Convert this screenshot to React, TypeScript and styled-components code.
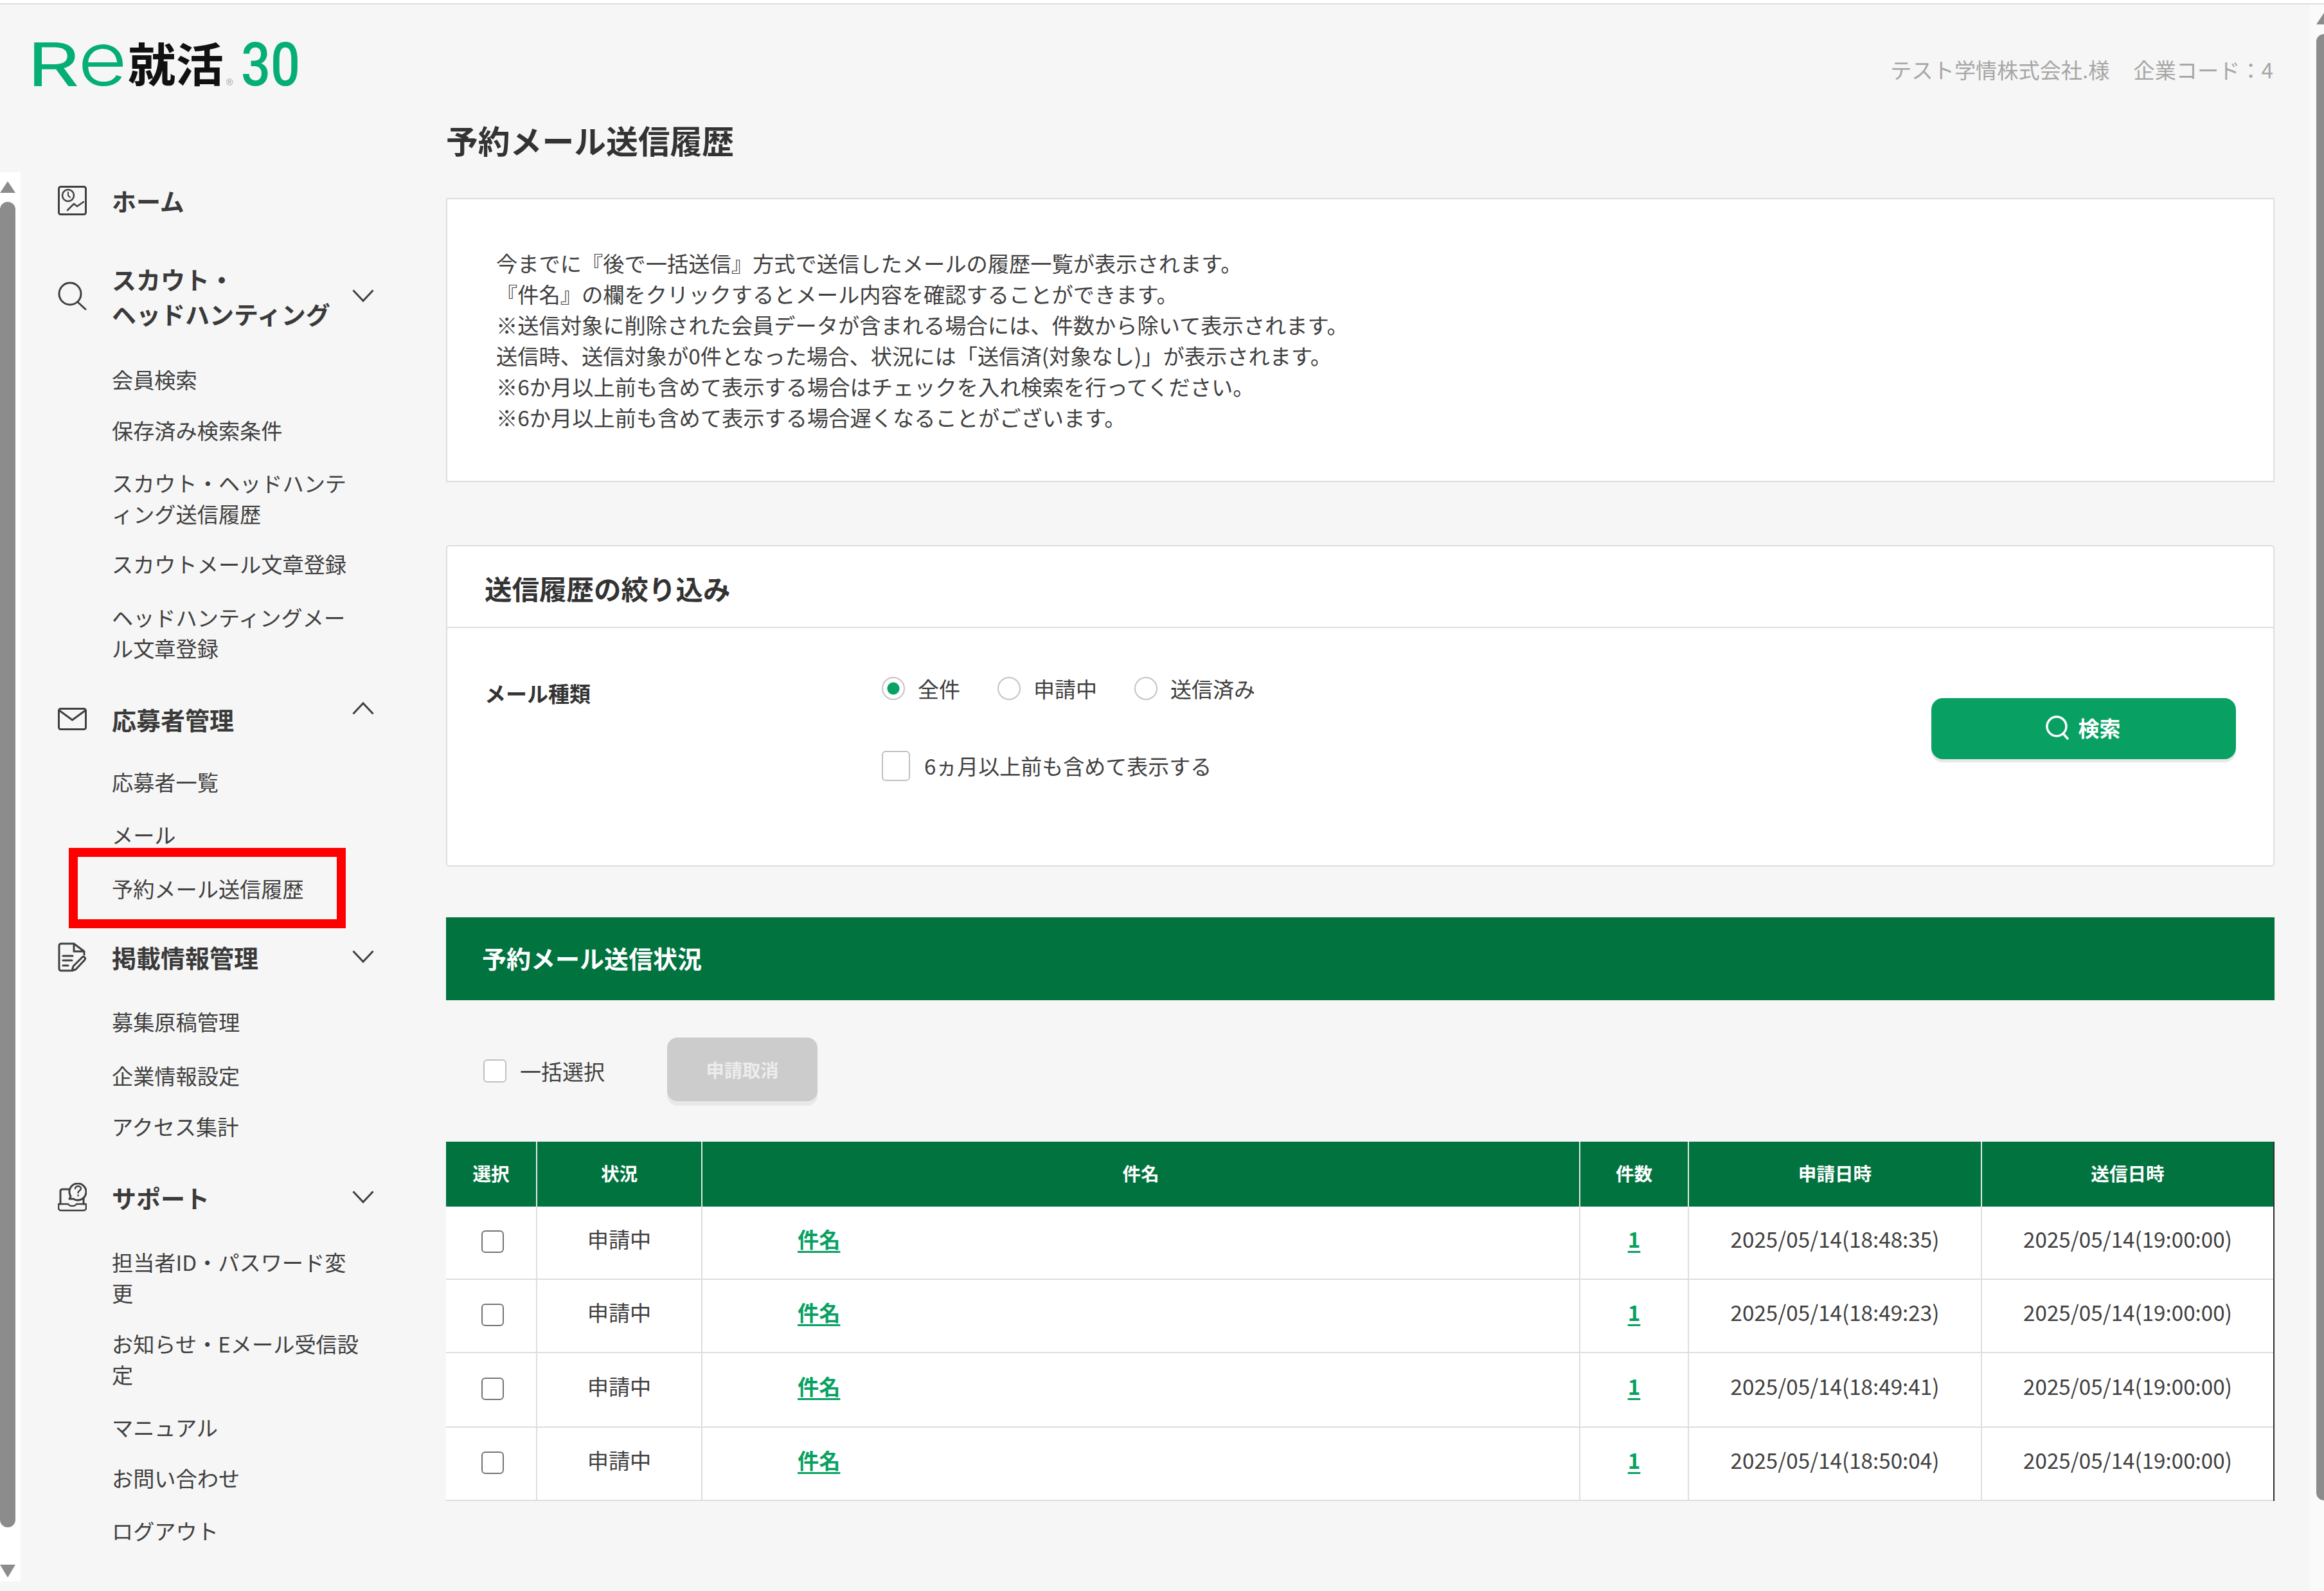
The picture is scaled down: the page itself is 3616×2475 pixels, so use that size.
import React from "react";
import styled, { createGlobalStyle } from "styled-components";

const FONT = `"Noto Sans CJK JP", "Noto Sans", sans-serif`;

const Global = createGlobalStyle`
  html, body { margin: 0; padding: 0; background: #f6f6f6; }
  body { font-family: ${FONT}; color: #444; }
  * { box-sizing: border-box; }
`;

const Page = styled.div`
  width: 3616px;
  height: 2475px;
  overflow: hidden;
  background: #f6f6f6;
  display: flex;
  flex-direction: column;
`;
const TopEdge = styled.div`
  height: 7px;
  flex: none;
  background: #fff;
  border-bottom: 2px solid #dedede;
`;
const Frame = styled.div`
  flex: 1;
  display: flex;
  min-height: 0;
`;

/* ---------- scrollbars ---------- */
const ArrowUp = styled.div`
  width: 0;
  height: 0;
  border-left: 12px solid transparent;
  border-right: 12px solid transparent;
  border-bottom: 18px solid #8c8c8c;
  flex: none;
`;
const ArrowDown = styled(ArrowUp)`
  border-bottom: 0;
  border-top: 20px solid #8c8c8c;
`;
const SideTrack = styled.div`
  width: 32px;
  height: 2192px;
  flex: none;
  background: #fff;
  padding-top: 14px;
  display: flex;
  flex-direction: column;
`;
const SideThumb = styled.div`
  width: 24px;
  height: 2062px;
  margin: 14px 0 58px;
  background: #8c8c8c;
  border-radius: 12px;
  flex: none;
`;
const PageTrack = styled.div`
  width: 22px;
  flex: none;
  background: #fafafa;
  padding: 13px 0 0 10px;
  overflow: hidden;
`;
const PageThumb = styled.div`
  width: 24px;
  height: 2281px;
  margin-top: 15px;
  background: #8c8c8c;
  border-radius: 12px;
`;

/* ---------- sidebar ---------- */
const Sidebar = styled.aside`
  width: 694px;
  flex: none;
  display: flex;
  flex-direction: column;
`;
const LogoBox = styled.div`
  height: 261px;
  padding: 20px 0 0 20px;
  flex: none;
  svg { display: block; overflow: visible; }
`;
const SideBody = styled.div`
  display: flex;
  flex: none;
`;
const Nav = styled.nav`
  padding: 17px 0 0 58px;
  flex: 1;
`;
const GroupHead = styled.div<{ $mt: number }>`
  display: flex;
  align-items: center;
  margin-top: ${(p) => p.$mt}px;
  width: 492px;
`;
const IconSlot = styled.div`
  width: 45px;
  flex: none;
  margin-right: 39px;
  display: flex;
  margin-top: -1px;
  svg { display: block; }
`;
const GroupTitle = styled.div`
  width: 374px;
  flex: none;
  font-size: 38px;
  line-height: 54px;
  font-weight: 700;
  color: #3a3a3a;
  white-space: nowrap;
`;
const Chevron = styled.svg<{ $open?: boolean }>`
  width: 34px;
  height: 20px;
  flex: none;
  margin-top: ${(p) => (p.$open ? -35 : -3)}px;
  display: block;
`;
const SubItem = styled.div<{ $mt: number }>`
  position: relative;
  margin: ${(p) => p.$mt}px 0 0 84px;
  font-size: 33.2px;
  line-height: 48px;
  font-weight: 400;
  color: #404040;
  white-space: nowrap;
`;
const Highlight = styled.div`
  position: absolute;
  left: -67px;
  top: -39px;
  width: 431px;
  height: 125px;
  border: 14px solid #ff0000;
`;

/* ---------- main ---------- */
const Main = styled.main`
  width: 2845px;
  flex: none;
  margin-right: 55px;
  display: flex;
  flex-direction: column;
`;
const Account = styled.div`
  margin-top: 77px;
  padding-right: 2px;
  display: flex;
  justify-content: flex-end;
  gap: 37px;
  font-size: 33.2px;
  line-height: 48px;
  color: #a6a6a6;
`;
const PageTitle = styled.h1`
  margin: 49px 0 2px 0;
  font-size: 49.8px;
  line-height: 72px;
  font-weight: 700;
  color: #333;
`;
const Notice = styled.section`
  margin-top: 53px;
  height: 442px;
  padding: 75px 76px 0;
  background: #fff;
  border: 2px solid #dedede;
  font-size: 33.25px;
  line-height: 48px;
  color: #404040;
`;
const FilterCard = styled.section`
  margin-top: 98px;
  height: 500px;
  background: #fff;
  border: 2px solid #dedede;
  border-radius: 5px;
  display: flex;
  flex-direction: column;
`;
const FilterHead = styled.h2`
  margin: 0;
  height: 127px;
  flex: none;
  padding: 4px 0 0 58px;
  display: flex;
  align-items: center;
  border-bottom: 2px solid #dedede;
  font-size: 42.5px;
  font-weight: 700;
  color: #333;
`;
const FilterBody = styled.div`
  flex: 1;
  display: grid;
  grid-template-columns: 616px 1fr auto;
  padding: 81px 58px 0 60px;
  align-items: start;
`;
const FieldLabel = styled.div`
  font-size: 33px;
  line-height: 48px;
  margin-top: -4px;
  margin-left: -2px;
  font-weight: 700;
  color: #333;
`;
const Options = styled.div`
  display: flex;
  flex-direction: column;
  gap: 78px;
  margin-top: -5px;
`;
const RadioRow = styled.div`
  display: flex;
  align-items: center;
  height: 36px;
`;
const RadioLabel = styled.label`
  display: flex;
  align-items: center;
  gap: 20px;
  margin-right: 58px;
  font-size: 33px;
  line-height: 36px;
  color: #404040;
`;
const Radio = styled.input.attrs({ type: "radio" })`
  appearance: none;
  margin: 0;
  width: 36px;
  height: 36px;
  border: 2.5px solid #c4c4c4;
  border-radius: 50%;
  background: #fff;
  &:checked {
    background: radial-gradient(circle, #08a262 0 9px, #fff 10px);
  }
`;
const CheckLabel = styled.label`
  display: flex;
  align-items: center;
  gap: 22px;
  font-size: 33px;
  line-height: 48px;
  color: #404040;
`;
const Check = styled.input.attrs({ type: "checkbox" })<{ $w: number; $h: number; $dark?: boolean }>`
  appearance: none;
  margin: 0;
  flex: none;
  width: ${(p) => p.$w}px;
  height: ${(p) => p.$h}px;
  border: 2.5px solid ${(p) => (p.$dark ? "#747474" : "#c0c0c0")};
  border-radius: 6px;
  background: #fff;
`;
const SearchButton = styled.button`
  width: 474px;
  height: 95px;
  margin-top: 28px;
  border: 0;
  border-radius: 18px;
  background: #09a163;
  box-shadow: 0 5px 0 #e8e8e8;
  color: #fff;
  font-family: ${FONT};
  font-size: 33px;
  font-weight: 700;
  display: flex;
  align-items: center;
  justify-content: center;
  gap: 14px;
  padding: 0 3px 3px 0;
  svg { display: block; }
`;
const Banner = styled.h2`
  margin: 79px 0 0;
  height: 129px;
  flex: none;
  background: #01733f;
  padding: 0 0 4px 56px;
  display: flex;
  align-items: center;
  color: #fff;
  font-size: 38px;
  font-weight: 700;
`;
const Toolbar = styled.div`
  height: 220px;
  flex: none;
  padding: 0 0 0 58px;
  display: flex;
  align-items: center;
`;
const BulkLabel = styled.label`
  display: flex;
  align-items: center;
  gap: 21px;
  font-size: 33px;
  line-height: 48px;
  color: #404040;
  margin: 0 97px 0 0;
`;
const CancelButton = styled.button`
  width: 234px;
  height: 99px;
  margin-bottom: 6px;
  border: 0;
  border-radius: 16px;
  background: #cccccc;
  box-shadow: 0 7px 0 #e8e8e8;
  color: #ececec;
  font-family: ${FONT};
  font-size: 28.3px;
  font-weight: 700;
`;
const TableWrap = styled.div`
  width: 2845px;
  border-right: 2px solid #2e2e2e;
`;
const Table = styled.table`
  width: 100%;
  table-layout: fixed;
  border-collapse: collapse;
  background: #fff;
  border-bottom: 2px solid #dedede;
`;
const HeadRow = styled.tr`
  height: 101px;
  background: #01733f;
`;
const Th = styled.th`
  padding: 0 0 4px;
  border-left: 2px solid #e6e6e6;
  font-size: 28.6px;
  font-weight: 700;
  color: #fff;
  text-align: center;
  &:first-child { border-left: 0; }
`;
const Tr = styled.tr<{ $h: number }>`
  height: ${(p) => p.$h}px;
  border-bottom: 2px solid #dedede;
`;
const Td = styled.td`
  padding: 0 0 12px;
  border-left: 2px solid #dedede;
  font-size: 33.2px;
  line-height: 48px;
  text-align: center;
  color: #404040;
  &:first-child { border-left: 0; padding: 0 0 3px; }
`;
const SubjectCell = styled(Td)`
  text-align: left;
  padding-left: 148px;
`;
const RowLink = styled.a`
  color: #09a163;
  font-weight: 700;
  text-decoration: underline;
  text-underline-offset: 5px;
`;
const CellCheck = styled.div`
  display: flex;
  justify-content: center;
  padding-left: 4px;
`;

/* ---------- drawings ---------- */
const ink = { fill: "none", stroke: "#404040", strokeWidth: 3, strokeLinecap: "round" as const, strokeLinejoin: "round" as const };

const Logo = () => (
  <svg width="460" height="200" viewBox="0 0 460 200">
    <text x="22" y="107" fontFamily="Inter, Liberation Sans, sans-serif" fontWeight="400" fontSize="93" fill="#05ae74" textLength="82" lengthAdjust="spacingAndGlyphs">R</text>
    <text x="101" y="106" fontFamily="Inter, Liberation Sans, sans-serif" fontWeight="300" fontSize="116" fill="#05ae74" textLength="77" lengthAdjust="spacingAndGlyphs">e</text>
    <text x="179" y="100" fontFamily={FONT} fontWeight="700" fontSize="72" fill="#111" textLength="149" lengthAdjust="spacingAndGlyphs">就活</text>
    <text x="332" y="106" fontFamily="Liberation Sans, sans-serif" fontSize="14" fill="#999">®</text>
    <text x="355" y="106" fontFamily="Roboto, sans-serif" fontWeight="500" fontSize="95" fill="#05ae74" textLength="92" lengthAdjust="spacingAndGlyphs">30</text>
  </svg>
);

const HomeIcon = () => (
  <svg width="45" height="46" viewBox="0 0 45 46">
    <rect x="1.5" y="1.5" width="42" height="43" rx="3" {...ink} />
    <circle cx="16" cy="15" r="9" {...ink} strokeWidth={2.5} />
    <path d="M16 10v5l3 3" {...ink} strokeWidth={2} />
    <path d="M15 38l10-10 5 4 10-7" {...ink} strokeWidth={2.5} />
  </svg>
);
const SearchIcon = () => (
  <svg width="45" height="45" viewBox="0 0 45 45">
    <circle cx="19" cy="19" r="17" {...ink} />
    <path d="M31 32l12 11" {...ink} />
  </svg>
);
const MailIcon = () => (
  <svg width="45" height="35" viewBox="0 0 45 35">
    <rect x="1.5" y="1.5" width="42" height="32" rx="3" {...ink} />
    <path d="M2 4l20.500 15L43 4" {...ink} />
  </svg>
);
const DocIcon = () => (
  <svg width="45" height="46" viewBox="0 0 45 46">
    <path d="M25 2H5a3 3 0 0 0-3 3v36a3 3 0 0 0 3 3h15M25 2l16 12v5M25 3v11h15" {...ink} />
    <path d="M8 21h15M8 28h14M8 36h8" {...ink} />
    <path d="M22 44l2-7 14-14c2-2 6 1 4 4L28 42z" {...ink} />
  </svg>
);
const SupportIcon = () => (
  <svg width="45" height="45" viewBox="0 0 45 45">
    <path d="M17 10H7a3 3 0 0 0-3 3v20M40 23v10" {...ink} />
    <path d="M18 25l2-4a13 13 0 1 1 4 4z" {...ink} />
    <path d="M27 9c0-5 9-5 9 0 0 3-4.500 3-4.500 6.500" {...ink} strokeWidth={2.5} />
    <path d="M31.500 19.500v.5" {...ink} strokeWidth={2.5} />
    <path d="M1 33h15c1 2 2 3 6.500 3S28 35 29 33h15v6a4 4 0 0 1-4 4H5a4 4 0 0 1-4-4z" {...ink} strokeWidth={2.5} />
  </svg>
);
const ChevronDown = () => (
  <Chevron viewBox="0 0 34 20">
    <path d="M1.500 1.500L17 18 32.500 1.500" fill="none" stroke="#404040" strokeWidth="3" />
  </Chevron>
);
const ChevronUp = () => (
  <Chevron $open viewBox="0 0 34 20">
    <path d="M1.500 18.500L17 2 32.500 18.500" fill="none" stroke="#404040" strokeWidth="3" />
  </Chevron>
);

/* ---------- data ---------- */
type Sub = { mt: number; lines: string[]; mark?: boolean };
type Group = { mt: number; lines: string[]; icon: React.ReactNode; chevron?: "up" | "down"; subs?: Sub[] };

const nav: Group[] = [
  { mt: 0, lines: ["ホーム"], icon: <HomeIcon /> },
  {
    mt: 68, lines: ["スカウト・", "ヘッドハンティング"], icon: <SearchIcon />, chevron: "down",
    subs: [
      { mt: 51, lines: ["会員検索"] },
      { mt: 31, lines: ["保存済み検索条件"] },
      { mt: 34, lines: ["スカウト・ヘッドハンテ", "ィング送信履歴"] },
      { mt: 30, lines: ["スカウトメール文章登録"] },
      { mt: 35, lines: ["ヘッドハンティングメー", "ル文章登録"] },
    ],
  },
  {
    mt: 60, lines: ["応募者管理"], icon: <MailIcon />, chevron: "up",
    subs: [
      { mt: 46, lines: ["応募者一覧"] },
      { mt: 34, lines: ["メール"] },
      { mt: 36, lines: ["予約メール送信履歴"], mark: true },
    ],
  },
  {
    mt: 56, lines: ["掲載情報管理"], icon: <DocIcon />, chevron: "down",
    subs: [
      { mt: 49, lines: ["募集原稿管理"] },
      { mt: 36, lines: ["企業情報設定"] },
      { mt: 31, lines: ["アクセス集計"] },
    ],
  },
  {
    mt: 60, lines: ["サポート"], icon: <SupportIcon />, chevron: "down",
    subs: [
      { mt: 49, lines: ["担当者ID・パスワード変", "更"] },
      { mt: 31, lines: ["お知らせ・Eメール受信設", "定"] },
      { mt: 34, lines: ["マニュアル"] },
      { mt: 31, lines: ["お問い合わせ"] },
      { mt: 34, lines: ["ログアウト"] },
    ],
  },
];

const notice = [
  "今までに『後で一括送信』方式で送信したメールの履歴一覧が表示されます。",
  "『件名』の欄をクリックするとメール内容を確認することができます。",
  "※送信対象に削除された会員データが含まれる場合には、件数から除いて表示されます。",
  "送信時、送信対象が0件となった場合、状況には「送信済(対象なし)」が表示されます。",
  "※6か月以上前も含めて表示する場合はチェックを入れ検索を行ってください。",
  "※6か月以上前も含めて表示する場合遅くなることがございます。",
];

const rows = [
  { h: 113, applied: "2025/05/14(18:48:35)" },
  { h: 114, applied: "2025/05/14(18:49:23)" },
  { h: 116, applied: "2025/05/14(18:49:41)" },
  { h: 114, applied: "2025/05/14(18:50:04)" },
];

const withBreaks = (lines: string[]) =>
  lines.map((l, i) => (
    <React.Fragment key={l}>
      {i > 0 && <br />}
      {l}
    </React.Fragment>
  ));

export default function App() {
  return (
    <Page>
      <Global />
      <TopEdge />
      <Frame>
        <Sidebar>
          <LogoBox>
            <Logo />
          </LogoBox>
          <SideBody>
            <SideTrack>
              <ArrowUp />
              <SideThumb />
              <ArrowDown />
            </SideTrack>
            <Nav>
              {nav.map((g) => (
                <React.Fragment key={g.lines[0]}>
                  <GroupHead $mt={g.mt}>
                    <IconSlot>{g.icon}</IconSlot>
                    <GroupTitle>{withBreaks(g.lines)}</GroupTitle>
                    {g.chevron === "down" && <ChevronDown />}
                    {g.chevron === "up" && <ChevronUp />}
                  </GroupHead>
                  {g.subs?.map((s) => (
                    <SubItem key={s.lines[0]} $mt={s.mt}>
                      {withBreaks(s.lines)}
                      {s.mark && <Highlight />}
                    </SubItem>
                  ))}
                </React.Fragment>
              ))}
            </Nav>
          </SideBody>
        </Sidebar>
        <Main>
          <Account>
            <span>テスト学情株式会社.様</span>
            <span>企業コード：4</span>
          </Account>
          <PageTitle>予約メール送信履歴</PageTitle>
          <Notice>{withBreaks(notice)}</Notice>
          <FilterCard>
            <FilterHead>送信履歴の絞り込み</FilterHead>
            <FilterBody>
              <FieldLabel>メール種類</FieldLabel>
              <Options>
                <RadioRow>
                  <RadioLabel><Radio name="kind" defaultChecked />全件</RadioLabel>
                  <RadioLabel><Radio name="kind" />申請中</RadioLabel>
                  <RadioLabel><Radio name="kind" />送信済み</RadioLabel>
                </RadioRow>
                <CheckLabel><Check $w={44} $h={47} />6ヵ月以上前も含めて表示する</CheckLabel>
              </Options>
              <SearchButton>
                <svg width="38" height="38" viewBox="0 0 38 38">
                  <circle cx="18" cy="17" r="15" fill="none" stroke="#fff" strokeWidth="3.5" />
                  <path d="M28 28l7 8" fill="none" stroke="#fff" strokeWidth="3.5" strokeLinecap="round" />
                </svg>
                検索
              </SearchButton>
            </FilterBody>
          </FilterCard>
          <Banner>予約メール送信状況</Banner>
          <Toolbar>
            <BulkLabel><Check $w={36} $h={36} />一括選択</BulkLabel>
            <CancelButton>申請取消</CancelButton>
          </Toolbar>
          <TableWrap>
            <Table>
              <colgroup>
                <col width="141" />
                <col width="257" />
                <col width="1366" />
                <col width="169" />
                <col width="456" />
                <col width="454" />
              </colgroup>
              <thead>
                <HeadRow>
                  <Th>選択</Th>
                  <Th>状況</Th>
                  <Th>件名</Th>
                  <Th>件数</Th>
                  <Th>申請日時</Th>
                  <Th>送信日時</Th>
                </HeadRow>
              </thead>
              <tbody>
                {rows.map((r) => (
                  <Tr key={r.applied} $h={r.h}>
                    <Td><CellCheck><Check $w={35} $h={35} $dark /></CellCheck></Td>
                    <Td>申請中</Td>
                    <SubjectCell><RowLink href="#">件名</RowLink></SubjectCell>
                    <Td><RowLink href="#">1</RowLink></Td>
                    <Td>{r.applied}</Td>
                    <Td>2025/05/14(19:00:00)</Td>
                  </Tr>
                ))}
              </tbody>
            </Table>
          </TableWrap>
        </Main>
        <PageTrack>
          <ArrowUp />
          <PageThumb />
        </PageTrack>
      </Frame>
    </Page>
  );
}
